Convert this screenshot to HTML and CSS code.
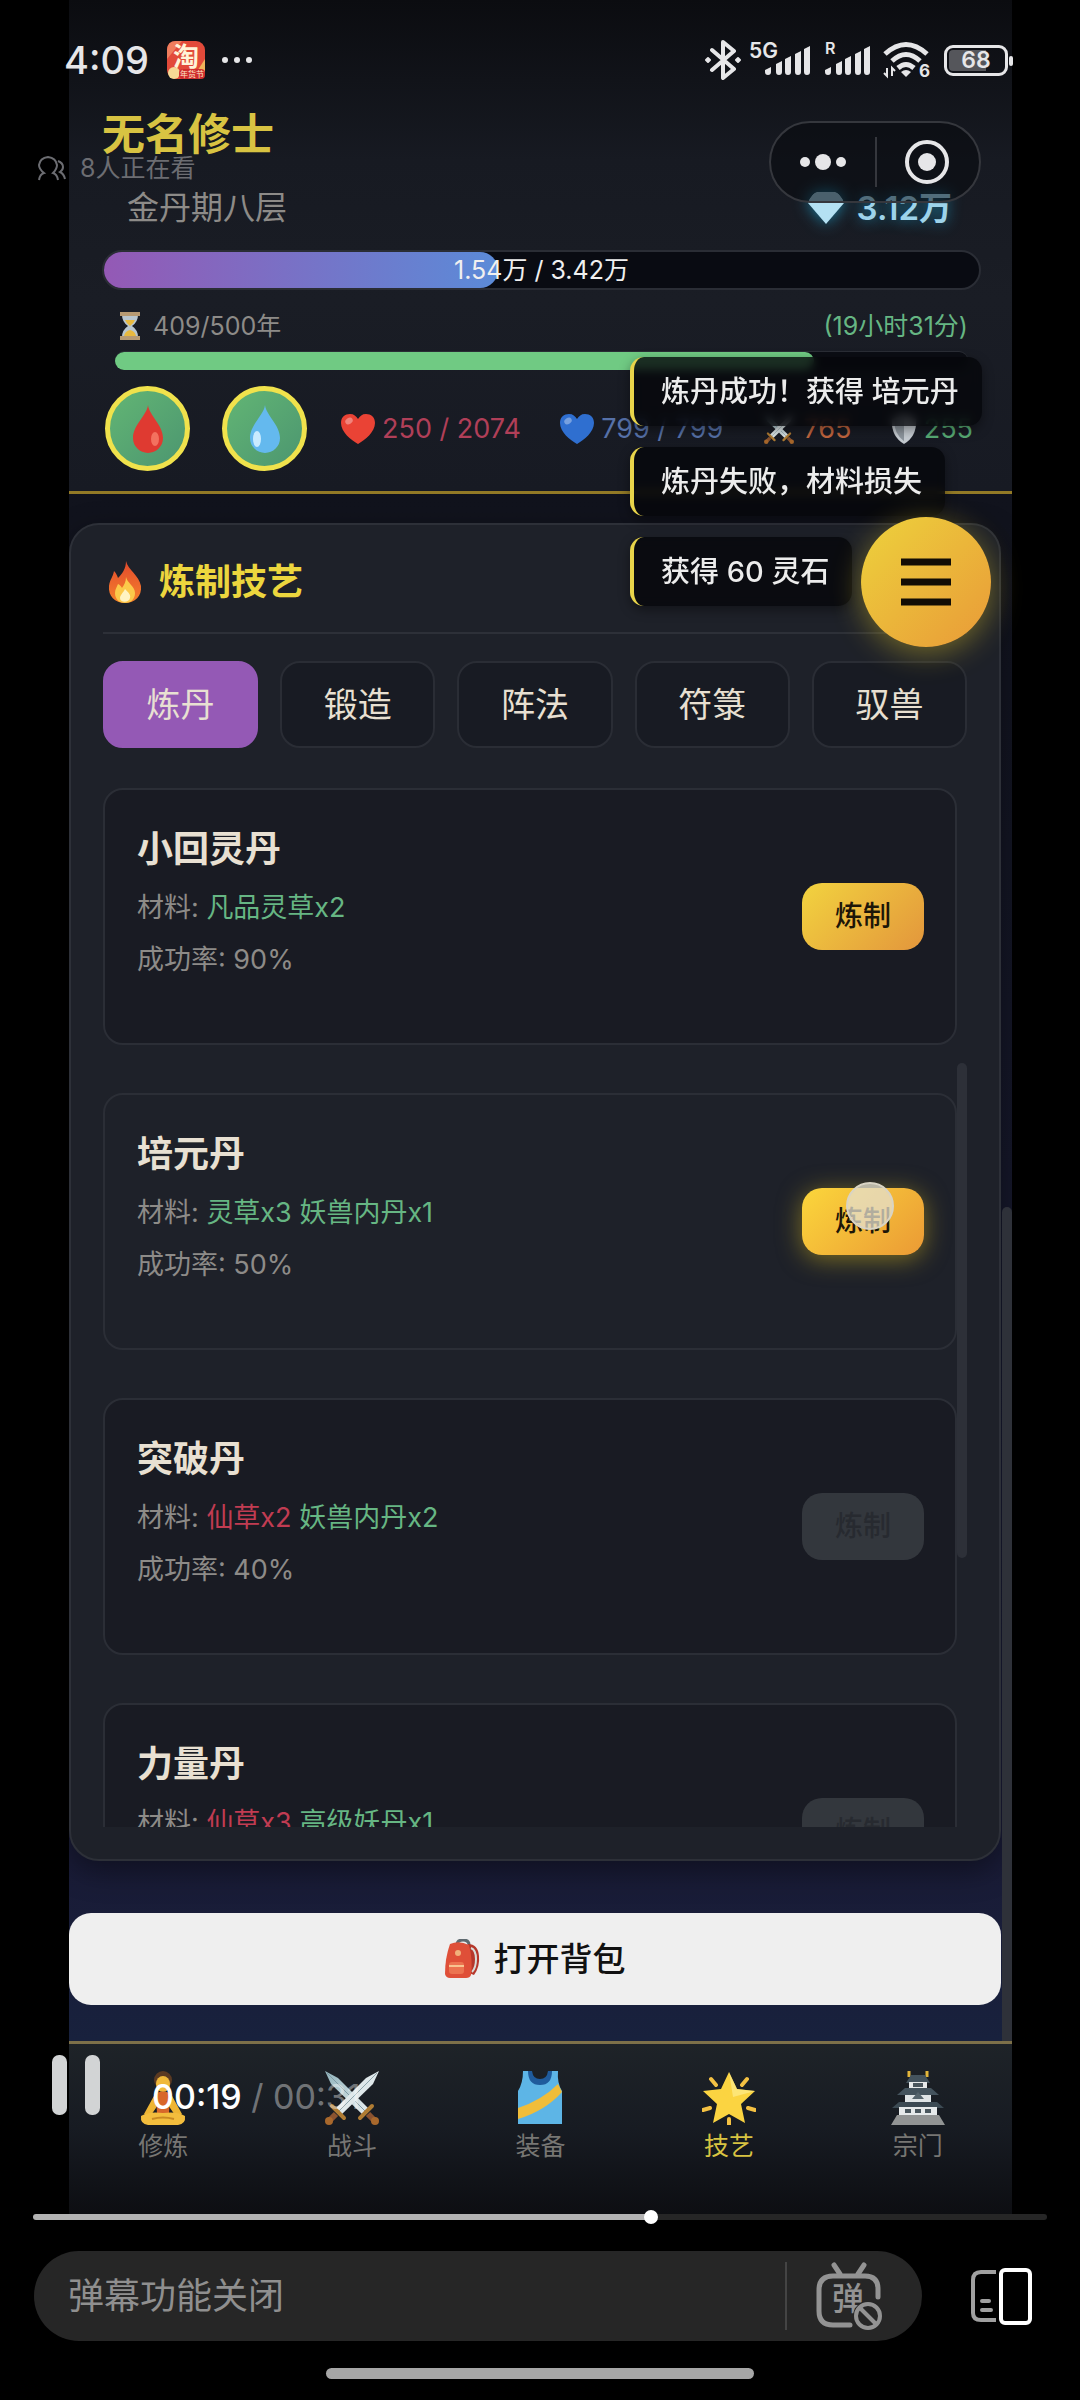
FILE: index.html
```html
<!DOCTYPE html>
<html lang="zh-CN">
<head>
<meta charset="utf-8">
<meta name="viewport" content="width=device-width, initial-scale=1">
<title>炼制技艺</title>
<link rel="stylesheet" href="styles.css">
</head>
<body>
<svg class="defs" aria-hidden="true">
  <defs>
    <linearGradient id="blade" x1="0" y1="0" x2="1" y2="1"><stop offset="0" stop-color="#8fb3bb"/><stop offset="1" stop-color="#e9eff1"/></linearGradient>
    <linearGradient id="flame" x1="0" y1="0" x2="0" y2="1"><stop offset="0" stop-color="#e2492c"/><stop offset="1" stop-color="#f5822c"/></linearGradient>
    <symbol id="heart" viewBox="0 0 34 30"><path d="M17 30C10 26 0 18 0 9 0 3 4 0 9 0c4 0 6 2 8 5 2-3 4-5 8-5 5 0 9 3 9 9 0 9-10 17-17 21z"/><ellipse cx="8" cy="7" rx="4" ry="3" fill="#fff" opacity=".35" transform="rotate(-35 8 7)"/></symbol>
    <symbol id="drop" viewBox="0 0 32 48"><path d="M16 0c1 10 15 20 15 33a15 15 0 0 1-30 0C1 20 15 10 16 0z"/></symbol>
    <symbol id="swords" viewBox="0 0 54 54">
      <path d="M0 0l13 7 31 31-6 6L6 13z" fill="url(#blade)"/><path d="M2 2l39 39" stroke="#7f9aa3" stroke-width="1"/>
      <path d="M54 0l-13 7-31 31 6 6L48 13z" fill="#dfe8ea"/><path d="M52 2L13 41" stroke="#8fa6ad" stroke-width="1"/>
      <path d="M7 35l12 12M47 35L35 47" stroke="#b07c33" stroke-width="4" stroke-linecap="round"/>
      <path d="M11 43l-6 6M43 43l6 6" stroke="#8a5330" stroke-width="6"/><circle cx="4" cy="50" r="4" fill="#a8682c"/><circle cx="50" cy="50" r="4" fill="#a8682c"/>
    </symbol>
    <symbol id="signal" viewBox="0 0 46 29"><path d="M0 24l6-3v5q0 3-3 3t-3-3zM11 18l6-3v11q0 3-3 3t-3-3zM20 13l6-3v16q0 3-3 3t-3-3zM30 8l6-3v21q0 3-3 3t-3-3zM39 3l6-3v26q0 3-3 3t-3-3z"/></symbol>
  </defs>
</svg>

<div class="phone">
  <header class="status">
    <div class="status-left">
      <span class="clock">4:09</span>
      <svg class="app-icon" viewBox="0 0 38 38"><rect width="38" height="38" rx="9" fill="#e24a3a"/><path d="M0 9q0-9 9-9h6L0 18z" fill="#ef7d5d"/><path d="M38 18v11q0 9-9 9h-4z" fill="#f0b45a"/><circle cx="7" cy="32" r="6" fill="#f6d995"/><rect x="12" y="28" width="26" height="10" rx="4" fill="#cf2e2e"/><text x="19" y="25" font-size="26" font-weight="700" text-anchor="middle" fill="#fff3d8">淘</text><text x="25" y="36" font-size="8" text-anchor="middle" fill="#ffe6c8">年货节</text></svg>
      <svg class="dots" viewBox="0 0 32 8" fill="#e6e6e8"><circle cx="4" cy="4" r="3"/><circle cx="16" cy="4" r="3"/><circle cx="28" cy="4" r="3"/></svg>
    </div>
    <div class="status-right">
      <svg class="bt" viewBox="0 0 36 40" fill="none" stroke="#e6e6e8" stroke-width="4" stroke-linejoin="round" stroke-linecap="round"><path d="M7 10l22 19-11 9V2l11 9L7 30"/><path d="M1 20l2-2 2 2-2 2zM31 20l2-2 2 2-2 2z" stroke-width="2" fill="#e6e6e8"/></svg>
      <span class="cell"><span class="net">5G</span><svg viewBox="0 0 46 29"><use href="#signal"/></svg></span>
      <span class="cell cell-r"><span class="net">R</span><svg viewBox="0 0 46 29"><use href="#signal"/></svg></span>
      <svg class="wifi" viewBox="0 0 48 38" fill="none" stroke="#e6e6e8" stroke-width="5"><path d="M2 13q21-19 42 0M9 20q14-13 28 0M15 27q8-7 16 0"/><path d="M18 31q5-4 10 0l-5 5z" fill="#e6e6e8" stroke="none"/><path d="M4 27v8l-3-3M9 35v-8l3 3" stroke-width="2"/><text x="36" y="36" font-size="17" font-weight="700" fill="#e6e6e8" stroke="none">6</text></svg>
      <span class="battery"><span class="battery-level">68</span></span>
    </div>
  </header>

  <div class="viewers">
    <svg viewBox="0 0 30 25" fill="none" stroke="#6c6d72" stroke-width="2"><path d="M2 24q1-6 5-7Q2 13 2 9q1-7 9-8 8 1 9 8 0 4-4 8 4 1 5 7M21 5q5 2 5 6 0 3-3 5 4 2 5 7"/></svg>
    <span>8人正在看</span>
  </div>

  <main class="game">
    <header class="profile">
      <h1>无名修士</h1>
      <div class="rank-row">
        <span class="rank">金丹期八层</span>
        <span class="gems"><svg viewBox="0 0 36 32"><path d="M10 0h16q6 1 10 11L18 32 0 11Q4 1 10 0z" fill="#b4e1f3"/><path d="M0 11Q4 1 10 0h16q6 1 10 11z" fill="#8fb9cc"/></svg>3.12万</span>
      </div>
      <div class="exp"><div class="exp-fill" style="width:45%"></div><span>1.54万 / 3.42万</span></div>
      <div class="life">
        <div class="life-row">
          <span class="life-age"><svg viewBox="0 0 22 28"><path d="M3 3h16q0 7-6 11 6 4 6 11H3q0-7 6-11-6-4-6-11z" fill="#b9c6ce"/><path d="M6 8h10q-1 3-5 6-4-3-5-6zM5 24q1-5 6-6 5 1 6 6z" fill="#e8b93f"/><path d="M1 0h20v4H1zM1 24h20v4H1z" fill="#b79a72"/></svg>409/500年</span>
          <span class="life-left">(19小时31分)</span>
        </div>
        <div class="life-bar"><div class="life-fill" style="width:82%"></div></div>
      </div>
      <div class="stats">
        <button class="potion" aria-label="气血丹"><svg viewBox="0 0 32 48" fill="#df3a31"><use href="#drop"/><ellipse cx="23" cy="34" rx="4" ry="7" fill="#f3715f" stroke="none"/></svg></button>
        <button class="potion" aria-label="灵力丹"><svg viewBox="0 0 32 48" fill="#64b9ee"><use href="#drop"/><ellipse cx="8" cy="34" rx="4" ry="8" fill="#c9ebff"/></svg></button>
        <ul class="stat-list">
          <li class="hp"><svg viewBox="0 0 34 30" fill="#ea4335"><use href="#heart"/></svg>250 / 2074</li>
          <li class="mp"><svg viewBox="0 0 34 30" fill="#2f6fd0"><use href="#heart"/></svg>799 / 799</li>
          <li class="atk"><svg viewBox="0 0 54 54"><use href="#swords"/></svg>765</li>
          <li class="def"><svg class="shield" viewBox="0 0 26 32"><path d="M13 0l13 5q1 19-13 27Q-1 24 0 5z" fill="#c7cdd3"/><path d="M13 3v26Q2 21 3 7z" fill="#8f979f"/></svg>255</li>
        </ul>
      </div>
    </header>

    <div class="capsule">
      <button aria-label="更多"><svg viewBox="0 0 46 18" fill="#e6e6e8"><circle cx="5" cy="9" r="5"/><circle cx="23" cy="9" r="8"/><circle cx="41" cy="9" r="5"/></svg></button>
      <button aria-label="关闭"><svg class="target" viewBox="0 0 46 46"><circle cx="23" cy="23" r="20" fill="none" stroke="#e6e6e8" stroke-width="4"/><circle cx="23" cy="23" r="9" fill="#e6e6e8"/></svg></button>
    </div>

    <div class="toasts" role="status">
      <p>炼丹成功！获得 培元丹</p>
      <p>炼丹失败，材料损失</p>
      <p>获得 60 灵石</p>
    </div>
    <button class="menu" aria-label="菜单"><svg viewBox="0 0 50 48"><path d="M0 4h50M0 24h50M0 44h50" stroke="#120d05" stroke-width="7"/></svg></button>

    <div class="content">
      <section class="panel">
        <h2><svg viewBox="0 0 34 42"><path d="M18 0c2 9 13 14 15 25 1 10-6 17-16 17S0 35 1 25c1-7 4-9 5-15 2 2 3 4 4 7 4-4 8-9 8-17z" fill="url(#flame)"/><path d="M18 16c1 6 9 9 9 16 0 6-4 10-10 10S7 38 7 32c0-4 2-6 3-9 2 1 3 2 4 4 2-3 4-6 4-11z" fill="#fcc94a"/><path d="M17 28c4 4 6 6 5 9-1 5-10 5-10 0 0-3 3-5 5-9z" fill="#fff3c2"/></svg>炼制技艺</h2>
        <div class="tabs">
          <button class="tab active">炼丹</button>
          <button class="tab">锻造</button>
          <button class="tab">阵法</button>
          <button class="tab">符箓</button>
          <button class="tab">驭兽</button>
        </div>
        <div class="recipes">
          <article class="recipe">
            <div class="info"><h3>小回灵丹</h3><p>材料: <span class="ok">凡品灵草x2</span></p><p>成功率: 90%</p></div>
            <button class="craft">炼制</button>
          </article>
          <article class="recipe hover">
            <div class="info"><h3>培元丹</h3><p>材料: <span class="ok">灵草x3 妖兽内丹x1</span></p><p>成功率: 50%</p></div>
            <button class="craft">炼制<span class="touch"></span></button>
          </article>
          <article class="recipe">
            <div class="info"><h3>突破丹</h3><p>材料: <span class="lack">仙草x2</span> <span class="ok">妖兽内丹x2</span></p><p>成功率: 40%</p></div>
            <button class="craft" disabled>炼制</button>
          </article>
          <article class="recipe">
            <div class="info"><h3>力量丹</h3><p>材料: <span class="lack">仙草x3</span> <span class="ok">高级妖丹x1</span></p></div>
            <button class="craft" disabled>炼制</button>
          </article>
          <div class="list-thumb"></div>
        </div>
      </section>
      <button class="bag"><svg viewBox="0 0 36 40"><path d="M12 6q0-5 6-5t6 5" fill="none" stroke="#5f6a70" stroke-width="3"/><path d="M23 5q10 0 11 12 1 11-5 19l-5-2z" fill="#b5372b"/><path d="M26 9q5 2 5 11t-4 13" fill="none" stroke="#d8dbd8" stroke-width="2"/><path d="M5 5q9-4 19 1 4 15 2 30-1 3-5 3H5q-4 0-5-4 0-16 5-30z" fill="#df4f38"/><circle cx="13" cy="14" r="3" fill="#f1b07b"/><rect x="4" y="23" width="15" height="12" rx="3" fill="#ec7350"/><path d="M4 27h15" stroke="#f8c490" stroke-width="2"/></svg>打开背包</button>
      <div class="page-thumb"></div>
    </div>

    <nav class="tabbar">
      <a href="#cultivate"><svg viewBox="0 0 54 54"><circle cx="27" cy="9" r="9" fill="#5b3a22"/><ellipse cx="27" cy="13" rx="7" ry="8" fill="#f0b93a"/><path d="M19 23q8-3 16 0l11 20-5 4-9-13v13H22V34l-9 13-5-4z" fill="#eeb534"/><path d="M20 22q7-3 14 0l-1 21H21z" fill="#d8672a"/><path d="M27 42q14-2 22 3 1 8-7 9H12q-8-1-7-9 8-5 22-3z" fill="#f3bd3d"/><path d="M16 48q11-3 22 0" fill="none" stroke="#c98a22" stroke-width="2"/></svg>修炼</a>
      <a href="#battle"><svg viewBox="0 0 54 54"><use href="#swords"/></svg>战斗</a>
      <a href="#gear"><svg viewBox="0 0 54 54"><path d="M10 0h8q3 14 15 9 5-2 4-9h8q-1 12 4 20v33H5V20q5-8 5-20z" fill="#5db5e6"/><path d="M15 0q0 14 12 14T39 0h-4q-1 8-8 8t-8-8z" fill="#1f5b9c"/><path d="M5 37q24-8 40-24l4 8Q32 40 5 48z" fill="#f0bd3a"/></svg>装备</a>
      <a href="#craft" class="current"><svg viewBox="0 0 54 54"><path d="M27 1l8 17 18 2-14 13 4 19-16-9-16 9 4-19L1 20l18-2z" fill="#fbd441"/><path d="M27 1l8 17 18 2-22 6z" fill="#fff09a" opacity=".6"/><path d="M9 8l5 6M45 8l-5 6M1 39l7-2M53 39l-7-2M27 48v6" stroke="#f4c143" stroke-width="4" stroke-linecap="round"/></svg>技艺</a>
      <a href="#sect"><svg viewBox="0 0 54 54"><path d="M18 0v6M36 0v6" stroke="#e3b63a" stroke-width="3"/><path d="M20 4h14l5 8H15z" fill="#44535d"/><path d="M18 11h18v6H18z" fill="#e6e9ea"/><path d="M14 17h26l8 7H6z" fill="#44535d"/><path d="M14 24h26v7H14z" fill="#dfe4e6"/><path d="M27 21l6 7H21z" fill="#55646d"/><path d="M8 31h38l7 6H1z" fill="#3c4a53"/><path d="M8 36h38v8H8z" fill="#e6e9ea"/><path d="M14 40h6M24 40h6M34 40h6M22 14h10" stroke="#4a565d" stroke-width="4"/><path d="M6 44h42l6 10H0z" fill="#929494"/></svg>宗门</a>
    </nav>
  </main>

  <div class="playback">
    <button class="pause" aria-label="暂停"></button>
    <span class="time"><b>00:19</b> / 00:31</span>
  </div>

  <footer class="player">
    <input class="seek" type="range" min="0" max="1000" value="611" aria-label="播放进度">
    <div class="danmu-row">
      <div class="danmu">
        <input type="text" placeholder="弹幕功能关闭" aria-label="弹幕">
        <button class="danmu-toggle" aria-label="弹幕开关"><svg viewBox="0 0 66 68" fill="none" stroke="#939393" stroke-width="5" stroke-linecap="round"><path d="M18 3l6 9M48 3l-6 9M62 35V27Q62 14 49 14H17Q3 14 3 28v21q0 14 14 14h17"/><text x="32" y="48" font-size="32" font-weight="500" text-anchor="middle" fill="#939393" stroke="none">弹</text><circle cx="52" cy="54" r="15" fill="#262626" stroke="none"/><circle cx="52" cy="54" r="12" stroke-width="4"/><path d="M44 46l16 16" stroke-width="4"/></svg></button>
      </div>
      <button class="rotate" aria-label="小窗"><svg viewBox="0 0 62 58" fill="none"><path d="M26 5H11Q3 5 3 13v33q0 7 8 7h15" stroke="#a0a0a0" stroke-width="4"/><path d="M12 34h7M12 43h9" stroke="#a0a0a0" stroke-width="4" stroke-linecap="round"/><rect x="31" y="3" width="29" height="53" rx="4" stroke="#fff" stroke-width="4"/></svg></button>
    </div>
    <div class="home-bar"></div>
  </footer>
</div>
</body>
</html>
```
FILE: styles.css
```css
* { box-sizing: border-box; margin: 0; padding: 0; }

body {
  background: #000;
  color: #e8e0d2;
  font-family: Inter, "Noto Sans CJK SC", sans-serif;
  font-size: 27px;
}

button, input {
  border: 0;
  background: none;
  color: inherit;
  font: inherit;
}

svg { display: block; flex: none; }
.defs { position: absolute; width: 0; height: 0; }
.phone { position: relative; }

/* Status bar over the video */
.status {
  position: absolute;
  z-index: 5;
  top: 0;
  left: 0;
  right: 0;
  display: flex;
  justify-content: space-between;
  align-items: center;
  height: 120px;
  padding: 0 72px 0 64px;
  color: #e6e6e8;
  fill: #e6e6e8;
}
.status-left, .status-right { display: flex; align-items: center; }
.clock { font-size: 38px; font-weight: 500; margin-right: 18px; }
.app-icon { width: 38px; height: 38px; margin-right: 16px; }
.dots { width: 32px; height: 8px; }
.bt { width: 36px; height: 40px; margin-right: 8px; }
.cell { position: relative; padding-left: 16px; margin-right: 14px; }
.cell svg { width: 46px; height: 29px; }
.cell-r { padding-left: 0; margin-right: 12px; }
.net { position: absolute; left: 0; top: -6px; font-size: 21px; line-height: 21px; font-weight: 600; }
.cell-r .net { font-size: 16px; line-height: 16px; }
.wifi { width: 48px; height: 38px; margin-right: 13px; }
.battery {
  position: relative;
  width: 64px;
  height: 31px;
  padding: 2px;
  border: 3px solid #e6e6e8;
  border-radius: 9px;
}
.battery::after {
  content: "";
  position: absolute;
  right: -8px;
  top: 8px;
  width: 4px;
  height: 10px;
  border-radius: 2px;
  background: #e6e6e8;
}
.battery-level {
  display: block;
  border-radius: 4px;
  background: linear-gradient(90deg, #55565b 68%, transparent 68%);
  font-size: 23px;
  line-height: 21px;
  font-weight: 600;
  text-align: center;
}

.viewers {
  position: absolute;
  z-index: 4;
  top: 150px;
  left: 37px;
  display: flex;
  align-items: center;
  gap: 13px;
  color: #6c6d72;
  font-size: 25px;
  line-height: 36px;
}
.viewers svg { width: 30px; height: 25px; }

/* Game page */
.game {
  position: relative;
  margin: 0 68px 0 69px;
  background: linear-gradient(#0f111a 0, #11131d 520px, #191b36 1860px, #18213d 2041px);
}
.profile {
  padding: 108px 31px 20px 33px;
  border-bottom: 3px solid #937a26;
  background: linear-gradient(#0b0c10, #171a22 160px, #1a1d25 300px, #171a23);
}
.profile h1 { color: #d8c342; font-size: 43px; line-height: 52px; font-weight: 700; }
.rank-row {
  display: flex;
  justify-content: space-between;
  align-items: center;
  margin-top: 28px;
  padding: 0 29px 0 25px;
  line-height: 40px;
}
.rank { color: #8d8b88; font-size: 32px; }
.gems {
  display: flex;
  align-items: center;
  gap: 13px;
  color: #9dd3ea;
  font-size: 33px;
  font-weight: 600;
  text-shadow: 0 0 14px #1d83a6;
}
.gems svg { width: 36px; height: 32px; filter: drop-shadow(0 0 8px #1d83a6); }

.exp {
  position: relative;
  height: 40px;
  margin-top: 22px;
  border: 2px solid #2a2d35;
  border-radius: 20px;
  background: #090b12;
}
.exp-fill {
  height: 100%;
  border-radius: 20px;
  background: linear-gradient(90deg, #9459b5, #5b8bd8);
}
.exp span {
  position: absolute;
  inset: 0;
  color: #f0f0f0;
  font-size: 25px;
  line-height: 36px;
  text-align: center;
}
.life { margin-top: 20px; padding: 0 13px; }
.life-row { display: flex; justify-content: space-between; font-size: 25px; line-height: 32px; }
.life-age { display: flex; align-items: center; gap: 12px; padding-left: 4px; color: #8d8b88; }
.life-age svg { width: 22px; height: 28px; }
.life-left { color: #66b683; }
.life-bar { height: 18px; margin-top: 10px; border-radius: 9px; background: #0b0d14; box-shadow: 0 -1px 0 #2a2d35; }
.life-fill { height: 100%; border-radius: 9px; background: #70ca83; }

.stats { display: flex; align-items: center; gap: 32px; margin-top: 16px; padding: 0 8px 0 3px; }
.potion {
  display: grid;
  place-items: center;
  width: 85px;
  height: 85px;
  flex: none;
  border: 5px solid #f0e24c;
  border-radius: 50%;
  background: linear-gradient(135deg, #62b574, #4c9670);
}
.potion svg { width: 32px; height: 48px; }
.stat-list {
  display: flex;
  flex: 1;
  justify-content: space-between;
  padding-left: 2px;
  list-style: none;
  white-space: nowrap;
}
.stat-list li { display: flex; align-items: center; gap: 7px; }
.stat-list svg { width: 34px; height: 30px; }
.stat-list .shield { width: 26px; }
.hp { color: #b03f58; }
.mp { color: #5671a8; }
.atk { color: #c2663f; }
.def { color: #58ac75; }

/* Overlays on the game page */
.capsule {
  position: absolute;
  z-index: 3;
  top: 121px;
  right: 31px;
  display: flex;
  width: 212px;
  height: 82px;
  border: 2px solid #35373d;
  border-radius: 41px;
  background: rgba(5, 7, 12, .5);
}
.capsule button { display: grid; place-items: center; flex: 1; }
.capsule button + button::before {
  content: "";
  position: absolute;
  left: 104px;
  top: 14px;
  width: 2px;
  height: 50px;
  background: #35373d;
}
.capsule svg { width: 46px; height: 18px; }
.capsule .target { height: 46px; }

.toasts {
  position: absolute;
  z-index: 2;
  top: 357px;
  left: 561px;
  display: flex;
  flex-direction: column;
  align-items: flex-start;
  gap: 21px;
}
.toasts p {
  padding: 0 23px 0 27px;
  border-left: 4px solid #e8d44a;
  border-radius: 14px;
  background: rgba(5, 6, 10, .8);
  backdrop-filter: blur(5px);
  box-shadow: 0 4px 12px rgba(0, 0, 0, .4);
  color: #ececec;
  font-size: 29px;
  font-weight: 500;
  line-height: 69px;
}
.menu {
  position: absolute;
  z-index: 3;
  top: 517px;
  right: 21px;
  display: grid;
  place-items: center;
  width: 130px;
  height: 130px;
  border-radius: 50%;
  background: linear-gradient(135deg, #edd23c, #e99a38);
  box-shadow: 0 6px 30px rgba(222, 196, 40, .45);
}
.menu svg { width: 50px; height: 48px; }

/* Crafting panel */
.content { position: relative; padding: 29px 11px 36px 0; }
.panel {
  padding: 33px 32px 32px;
  border: 2px solid #2d3038;
  border-radius: 30px;
  background: #1e2129;
  box-shadow: 0 10px 30px rgba(0, 0, 0, .4);
}
.panel h2 {
  display: flex;
  align-items: center;
  gap: 17px;
  padding: 0 0 26px 5px;
  border-bottom: 2px solid #2d3038;
  color: #ecd63e;
  font-size: 36px;
  line-height: 48px;
  font-weight: 700;
}
.panel h2 svg { width: 34px; height: 42px; }
.tabs { display: flex; gap: 22px; margin-top: 27px; }
.tab {
  flex: 1;
  border: 2px solid #2a2d35;
  border-radius: 20px;
  background: #181b23;
  font-size: 34px;
  line-height: 83px;
}
.tab.active { border-color: #9459b5; background: #9459b5; }

.recipes {
  position: relative;
  display: flex;
  flex-direction: column;
  gap: 48px;
  max-height: 1039px;
  margin-top: 40px;
  padding-right: 10px;
  overflow: hidden;
}
.recipe {
  display: flex;
  flex: none;
  justify-content: space-between;
  align-items: center;
  min-height: 257px;
  padding: 0 31px 0 32px;
  border: 2px solid #2b2e36;
  border-radius: 20px;
  background: #191b23;
}
.recipe.hover { background: #1e2129; }
.info { align-self: flex-start; padding: 37px 0 65px; color: #8d8b88; line-height: 36px; }
.info h3 { margin-bottom: 19px; color: #e8e0d2; font-size: 36px; line-height: 44px; font-weight: 700; }
.info p + p { margin-top: 16px; }
.ok { color: #66b683; }
.lack { color: #c13c52; }
.craft {
  position: relative;
  padding: 0 33px;
  border-radius: 20px;
  background: linear-gradient(135deg, #f2d33f, #e3963c);
  color: #1d1608;
  font-size: 28px;
  font-weight: 500;
  line-height: 67px;
}
.hover .craft { background: linear-gradient(135deg, #fbd63b, #eb9a35); box-shadow: 0 4px 24px rgba(222, 190, 30, .5); }
.craft:disabled { background: #33373d; color: #272a30; }
.touch {
  position: absolute;
  top: -6px;
  left: 44px;
  width: 48px;
  height: 48px;
  border: 2px solid #d9d4c4;
  border-radius: 50%;
  background: rgba(228, 224, 208, .75);
}
.list-thumb {
  position: absolute;
  top: 275px;
  right: 0;
  width: 10px;
  height: 495px;
  border-radius: 5px;
  background: #2d3038;
}
.page-thumb {
  position: absolute;
  top: 713px;
  right: 0;
  bottom: 0;
  width: 10px;
  border-radius: 5px 5px 0 0;
  background: #2e3139;
}

.bag {
  display: flex;
  justify-content: center;
  align-items: center;
  gap: 13px;
  width: 100%;
  margin-top: 52px;
  border-radius: 22px;
  background: #efefef;
  color: #111;
  font-size: 33px;
  font-weight: 500;
  line-height: 92px;
}
.bag svg { width: 36px; height: 40px; }

.tabbar {
  display: flex;
  padding: 27px 0 52px;
  border-top: 3px solid #7d7049;
  background: linear-gradient(#1e2328, #171b22 50%, #0d0e12);
}
.tabbar a {
  display: flex;
  flex: 1;
  flex-direction: column;
  align-items: center;
  gap: 5px;
  color: #777673;
  font-size: 25px;
  line-height: 32px;
  text-decoration: none;
}
.tabbar svg { width: 54px; height: 54px; }
.tabbar .current { color: #d8c342; }

/* Video player controls */
.playback {
  position: absolute;
  z-index: 4;
  left: 52px;
  bottom: 285px;
  display: flex;
  align-items: flex-end;
  gap: 52px;
}
.pause { display: flex; justify-content: space-between; width: 48px; height: 60px; }
.pause::before, .pause::after {
  content: "";
  width: 15px;
  height: 60px;
  border-radius: 7px;
  background: #d2d4d5;
}
.time { color: rgba(255, 255, 255, .4); font-size: 34px; line-height: 36px; }
.time b { color: #fff; font-weight: 500; }

.seek {
  display: block;
  width: calc(100% - 66px);
  height: 6px;
  margin: 0 33px;
  border-radius: 3px;
  appearance: none;
  background: linear-gradient(90deg, #b3b3b3 61%, #262626 61%);
}
.seek::-webkit-slider-thumb { width: 14px; height: 14px; border-radius: 50%; appearance: none; background: #fff; }
.player { position: relative; padding-bottom: 21px; }
.danmu-row { display: flex; align-items: center; gap: 48px; margin-top: 31px; padding: 0 48px 0 34px; }
.danmu {
  display: flex;
  flex: 1;
  align-items: center;
  height: 90px;
  padding: 0 40px 0 34px;
  border-radius: 45px;
  background: #262626;
}
.danmu input { flex: 1; min-width: 0; font-size: 36px; outline: 0; }
.danmu input::placeholder { color: #8f8f8f; opacity: 1; }
.danmu-toggle { padding-left: 29px; border-left: 2px solid #444; }
.danmu-toggle svg { width: 66px; height: 68px; }
.rotate svg { width: 62px; height: 58px; }
.home-bar { width: 428px; height: 11px; margin: 27px auto 0; border-radius: 6px; background: #a6a6a6; }
```
